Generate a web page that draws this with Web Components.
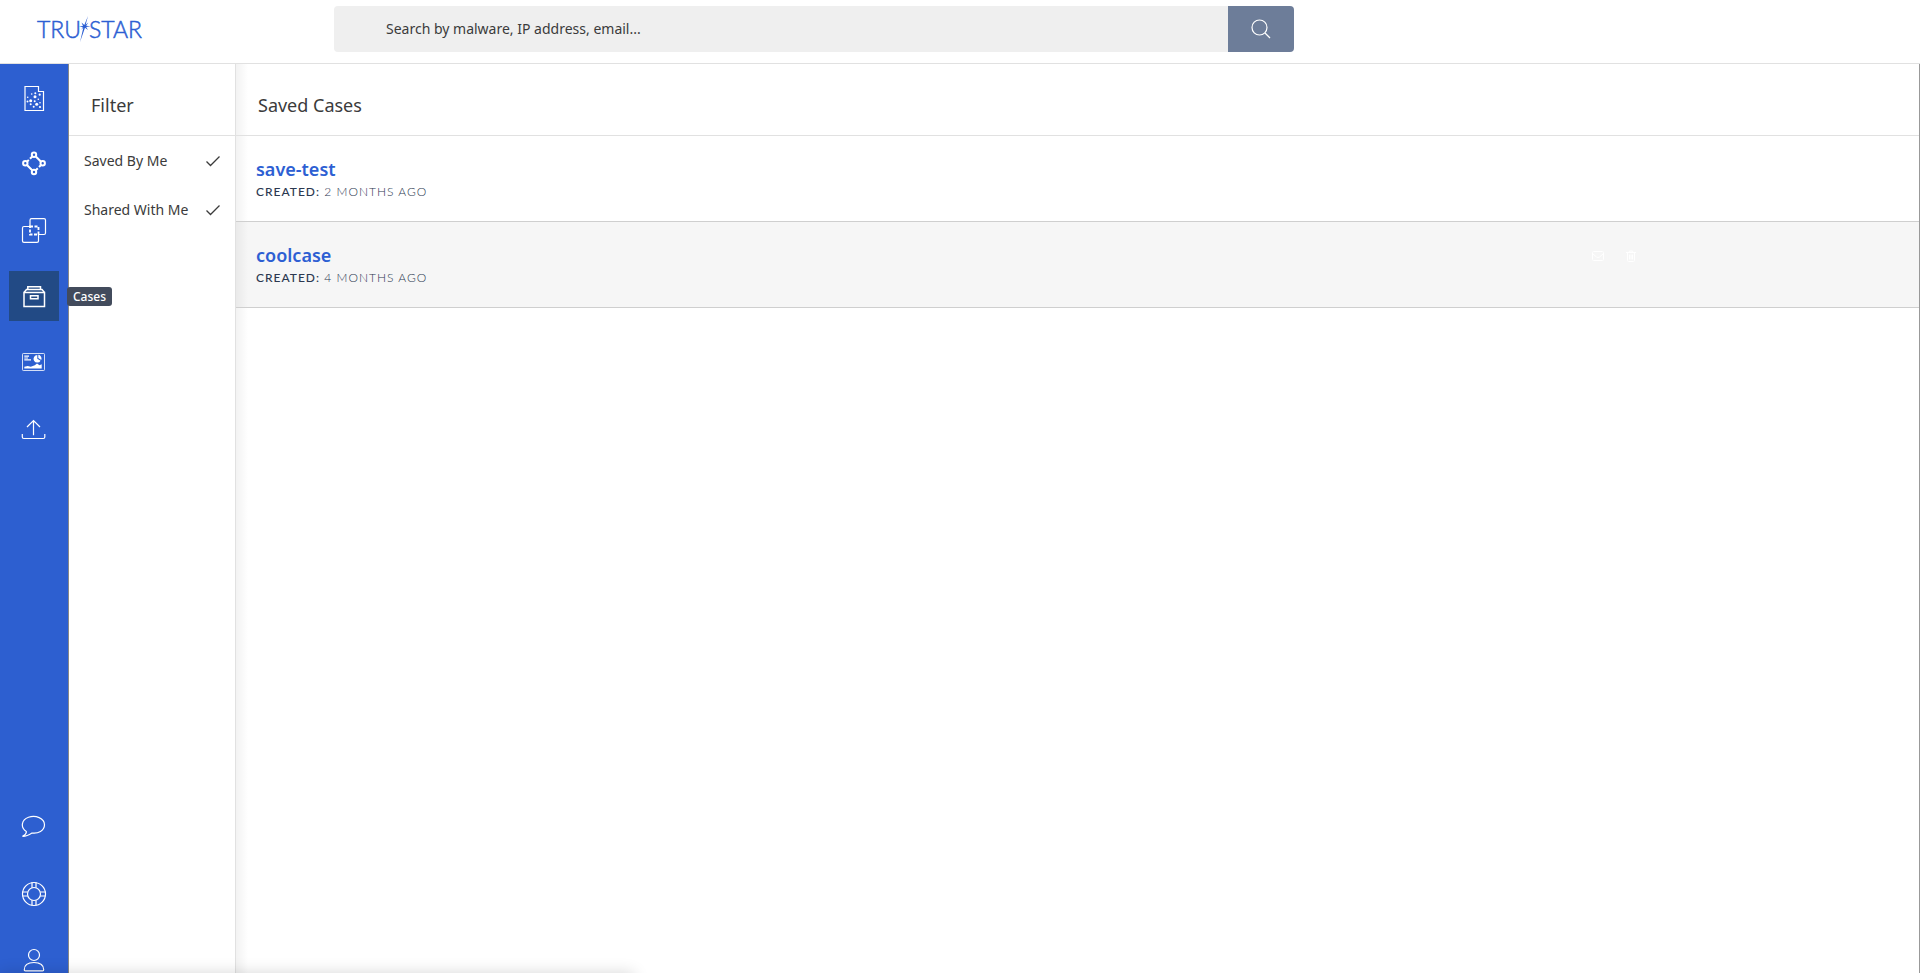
<!DOCTYPE html>
<html lang="en">
<head>
<meta charset="utf-8">
<title>TruSTAR - Cases</title>
<style>
  html, body {
    height: 100%;
    margin: 0;
  }

  body {
    overflow: hidden;
    color: #3b3b3b;
    background: #fff;
    font: 14px/20px "Noto Sans", "Open Sans", sans-serif;
  }
</style>
</head>
<body>
<trustar-app>
  <app-header slot="header"></app-header>

  <side-nav slot="nav">
    <nav-item icon="reports" label="Reports"></nav-item>
    <nav-item icon="graph" label="Constellation"></nav-item>
    <nav-item icon="compare" label="Compare"></nav-item>
    <nav-item icon="cases" label="Cases" active></nav-item>
    <nav-item icon="dashboard" label="Dashboard"></nav-item>
    <nav-item icon="upload" label="Submit"></nav-item>
    <nav-item slot="bottom" icon="chat" label="Chat"></nav-item>
    <nav-item slot="bottom" icon="help" label="Help"></nav-item>
    <nav-item slot="bottom" icon="user" label="Account"></nav-item>
  </side-nav>

  <titled-panel slot="filter">
    <span slot="title">Filter</span>
    <filter-option>Saved By Me</filter-option>
    <filter-option>Shared With Me</filter-option>
  </titled-panel>

  <titled-panel slot="cases">
    <span slot="title">Saved Cases</span>
    <case-row created="2 months ago">save-test</case-row>
    <case-row created="4 months ago" highlighted>coolcase</case-row>
  </titled-panel>
</trustar-app>

<script>
const ICONS = {
  reports: `
    <path d="M17.5 1.5H4V25.5H22.5V6.5H17.5z"/>
    <g fill="currentColor" stroke="none">
      <circle cx="14" cy="11.7" r="1.5"/><circle cx="9.7" cy="15.7" r="1.5"/>
      <circle cx="15.7" cy="19.3" r="1.5"/><circle cx="10.7" cy="9" r=".8"/>
      <circle cx="14.3" cy="8.3" r="1"/><circle cx="18.7" cy="9.7" r="1.1"/>
      <circle cx="6.7" cy="12.3" r=".8"/><circle cx="17.3" cy="14.3" r=".8"/>
      <circle cx="13.7" cy="16.3" r="1"/><circle cx="6.5" cy="16.5" r="1"/>
      <circle cx="9.7" cy="19.3" r="1"/><circle cx="12.7" cy="21.7" r="1"/>
      <circle cx="19" cy="17.7" r=".8"/><circle cx="19" cy="22" r="1.1"/>
    </g>`,
  graph: `
    <g stroke-width="2">
      <circle cx="13" cy="3.7" r="2.2"/><circle cx="4.3" cy="12.3" r="2.2"/>
      <circle cx="21.7" cy="12.3" r="2.2"/><circle cx="13" cy="21" r="2.2"/>
      <path d="M11.2 5.5 9 7.7M7.8 8.9 6.2 10.5M14.8 5.5l5 5M6.2 14.2l5 5M14.8 19.2l2-2M18 16l1.8-1.8"/>
    </g>`,
  compare: `
    <path d="M9 9.5V3.2Q9 1.7 10.5 1.7H23Q24.5 1.7 24.5 3.2V16Q24.5 17.5 23 17.5H17.5V24Q17.5 25.3 16 25.3H3Q1.5 25.3 1.5 24V11Q1.5 9.5 3 9.5H9"/>
    <path d="M9 9.5h8.5v8H9z" stroke-width="1.8" stroke-dasharray="3 1.5"/>`,
  cases: `
    <path d="M3 9.5h20.5v14H3z" stroke-width="1.5"/>
    <path d="M3.2 9.2 5.5 6.5h15.5l2.3 2.7M6.8 6.3V3.7h12.7v2.6M9.5 12.7h7.5v3H9.5z" stroke-width="1.5"/>`,
  dashboard: `
    <rect x="1.5" y="4.5" width="22" height="17" rx=".8" stroke-width=".8"/>
    <path d="M3.3 7.2h4.7M3.3 9h3.7M3.3 10.8h6.7"/>
    <g fill="currentColor" stroke="none">
      <path d="M16.3 6a3.8 3.8 0 1 0 3.3 5.7L16.3 9.8zM17.3 5.8v3.3l3 1.8a3.8 3.8 0 0 0-3-5.1z"/>
      <path d="M3.3 19.5v-1.7l3.5-.8 3 .8 4-1.5 2.2-1.8 2.5 1.7 2.2-1v4.3z"/>
    </g>`,
  upload: `<path d="M12.5 20.3V5.5M6 12l6.5-6.5L19 12M1.3 19v3q0 1.5 1.5 1.5h19.5q1.5 0 1.5-1.5v-3"/>`,
  chat: `<path d="M5.3 16.5C-.8 12.5.3 4.8 7.5 2.3c7-2.4 16 .8 16 7.5 0 6-6.5 9-12.5 8.2-2 1.3-5.5 3.5-9.5 3.3 2.2-1 4.2-2.5 3.8-4.8z"/>`,
  help: `
    <circle cx="13" cy="13" r="11.5"/><circle cx="13" cy="13" r="6.5"/>
    <path d="M11 1.5V6.8M15 1.5V6.8M11 19.2v5.3M15 19.2v5.3M1.5 11H6.8M1.5 15H6.8M19.2 11h5.3M19.2 15h5.3"/>`,
  user: `<circle cx="13" cy="8" r="5.5"/><path d="M3.3 22.7c0-4.7 4-7.2 9.7-7.2s9.7 2.5 9.7 7.2q0 1.1-1.1 1.1H4.4q-1.1 0-1.1-1.1z"/>`
};

class BaseElement extends HTMLElement {
  connectedCallback() {
    if(this.shadowRoot) {
      return;
    }

    let t = document.createElement('template');
    t.innerHTML = this.template;
    this.attachShadow({ mode: 'open' });
    this.shadowRoot.appendChild(t.content.cloneNode(true));
  }
}

class TrustarApp extends BaseElement {
  get template() {
    return `
      <style>
        :host {
          display: grid;
          grid-template: auto minmax(0, 1fr) / auto 167px minmax(0, 1fr);
          height: 100vh;
        }

        ::slotted([slot="header"]) {
          grid-column: 1 / -1;
        }

        ::slotted([slot="filter"]) {
          border-right: 1px solid #e1e1e1;
        }

        ::slotted([slot="cases"]) {
          border-right: 1px solid #999;
          background: linear-gradient(to right, rgba(0, 0, 0, .05), transparent 12px);
        }

        /* soft edge along the bottom of the window */
        .edge {
          position: fixed;
          top: 100%;
          left: 0;
          width: 33%;
          height: 20px;
          box-shadow: 0 0 16px rgba(0, 0, 0, .16);
        }
      </style>

      <slot name="header"></slot>
      <slot name="nav"></slot>
      <slot name="filter"></slot>
      <slot name="cases"></slot>
      <div class="edge"></div>
    `;
  }
}

class AppHeader extends BaseElement {
  get template() {
    return `
      <style>
        :host {
          display: flex;
          align-items: flex-start;
          padding: 6px 0 11px 37px;
          border-bottom: 1px solid #e1e1e1;
        }

        .logo {
          display: flex;
          align-items: center;
          width: 297px;
          height: 46px;
          color: #2d5fd3;
          font: 300 23px/28px Lato, sans-serif;
          text-decoration: none;
          -webkit-text-stroke: .5px;
        }

        .logo svg {
          width: 12px;
          height: 26px;
          margin: 0 -2px;
        }

        form {
          display: flex;
          width: 50vw;
          height: 46px;
          border-radius: 4px;
          overflow: hidden;
        }

        input {
          flex: 1;
          min-width: 0;
          padding: 0 52px;
          border: 0;
          outline: 0;
          background: #efefef;
          color: inherit;
          font: inherit;
        }

        input::placeholder {
          color: #3b3b3b;
          opacity: 1;
        }

        button {
          display: grid;
          place-items: center;
          width: 66px;
          padding: 0;
          border: 0;
          background: #6d7d99;
          color: #fff;
        }
      </style>

      <a class="logo" href="#" aria-label="TruSTAR">
        <span>TRU</span>
        <svg viewBox="0 0 12 26" fill="currentColor" aria-hidden="true">
          <path d="M9 0 6.6 8.8 9.3 6.5 7.2 9.8 11.5 10.2 7.2 10.9 9 14 6 11.8 1 26 4.3 11.8 2 13.7 3.9 11.2 0 10.4 4 9.9 2.5 6.5 5.3 9z"/>
        </svg>
        <span>STAR</span>
      </a>
      <form role="search">
        <input type="search" aria-label="Search" placeholder="Search by malware, IP address, email...">
        <button type="button" aria-label="Run search">
          <svg width="20" height="20" viewBox="0 0 20 20" fill="none" stroke="currentColor" stroke-width="1.2">
            <circle cx="8.5" cy="8.5" r="7.5"/><path d="m14 14 5 5"/>
          </svg>
        </button>
      </form>
    `;
  }
}

class SideNav extends BaseElement {
  get template() {
    return `
      <style>
        :host {
          display: block;
          border-right: 1px solid #888;
          background: #2d5fd0;
        }

        /* runs a little past the window */
        nav {
          display: flex;
          flex-direction: column;
          justify-content: space-between;
          box-sizing: border-box;
          height: calc(100% + 12px);
          padding: 9px 9px 0;
        }

        div {
          display: grid;
          gap: 16px;
        }
      </style>

      <nav>
        <div><slot></slot></div>
        <div><slot name="bottom"></slot></div>
      </nav>
    `;
  }
}

class NavItem extends BaseElement {
  get template() {
    let label = this.getAttribute('label');
    let tip = this.hasAttribute('active') ? `<span>${label}</span>` : '';

    return `
      <style>
        :host {
          display: block;
          position: relative;
        }

        a {
          display: grid;
          place-items: center;
          width: 50px;
          height: 50px;
          color: #fff;
        }

        :host([active]) a {
          background: #224a85;
        }

        svg {
          width: 26px;
          height: 26px;
          fill: none;
          stroke: currentColor;
          stroke-width: 1.2;
        }

        span {
          position: absolute;
          z-index: 1;
          top: 16px;
          left: 58px;
          padding: 0 6px;
          border-radius: 3px;
          background: #424b5c;
          color: #fff;
          font-size: 12px;
          font-weight: 500;
          line-height: 19px;
        }
      </style>

      <a href="#" aria-label="${label}">
        <svg viewBox="0 0 26 26" aria-hidden="true">${ICONS[this.getAttribute('icon')]}</svg>
      </a>
      ${tip}
    `;
  }
}

class TitledPanel extends BaseElement {
  get template() {
    return `
      <style>
        :host {
          display: block;
          min-width: 0;
        }

        h2 {
          margin: 0;
          padding: 29px 22px 18px;
          border-bottom: 1px solid #e1e1e1;
          font-size: 18px;
          font-weight: 400;
          line-height: 24px;
        }
      </style>

      <h2><slot name="title"></slot></h2>
      <slot></slot>
    `;
  }
}

class FilterOption extends BaseElement {
  get template() {
    return `
      <style>
        :host {
          display: block;
        }

        label {
          display: flex;
          align-items: center;
          justify-content: space-between;
          height: 49px;
          padding: 0 15px;
        }

        input {
          position: absolute;
          opacity: 0;
        }

        svg {
          fill: none;
          stroke: currentColor;
          stroke-width: 1.3;
        }

        input:not(:checked) + svg {
          visibility: hidden;
        }
      </style>

      <label>
        <slot></slot>
        <input type="checkbox" checked>
        <svg width="14" height="12" viewBox="0 0 14 12" aria-hidden="true"><path d="m.5 6.5 4 4L13.5 1.5"/></svg>
      </label>
    `;
  }
}

class CaseRow extends BaseElement {
  get template() {
    return `
      <style>
        :host {
          display: grid;
          grid-template-columns: 4fr 1fr;
          align-items: start;
          padding: 21px 20px 18px;
          border-bottom: 1px solid #cfcfcf;
        }

        :host([highlighted]) {
          background: rgba(0, 0, 0, .035);
        }

        a {
          color: #2d5fd3;
          font-size: 18px;
          font-weight: 600;
          line-height: 24px;
          text-decoration: none;
        }

        p {
          margin: 0;
          color: #2c3850;
          font: 300 12px/22px Lato, sans-serif;
          letter-spacing: 1px;
          text-transform: uppercase;
        }

        b {
          font-weight: 500;
        }

        .actions {
          display: flex;
          padding: 0 11px;
        }

        button {
          display: grid;
          place-items: center;
          width: 33px;
          height: 26px;
          padding: 0;
          border: 0;
          background: none;
          color: #fff;
        }

        svg {
          width: 12px;
          height: 12px;
          fill: none;
          stroke: currentColor;
        }
      </style>

      <div>
        <a href="#"><slot></slot></a>
        <p><b>Created:</b> ${this.getAttribute('created')}</p>
      </div>
      <div class="actions">
        <button type="button" aria-label="Share">
          <svg viewBox="0 0 12 12"><rect x=".5" y="1.5" width="11" height="9" rx="1"/><path d="m.5 3.5 4 3.5q1.5 1 3 0l4-3.5"/></svg>
        </button>
        <button type="button" aria-label="Delete">
          <svg viewBox="0 0 12 12"><path d="M1 2.5h10M4 2.5l.5-1.500h3l.5 1.500M2.5 2.5v8q0 1 1 1h5q1 0 1-1v-8M4.5 4.5v5M6 4.5v5M7.5 4.5v5"/></svg>
        </button>
      </div>
    `;
  }
}

customElements.define('trustar-app', TrustarApp);
customElements.define('app-header', AppHeader);
customElements.define('side-nav', SideNav);
customElements.define('nav-item', NavItem);
customElements.define('titled-panel', TitledPanel);
customElements.define('filter-option', FilterOption);
customElements.define('case-row', CaseRow);
</script>
</body>
</html>
